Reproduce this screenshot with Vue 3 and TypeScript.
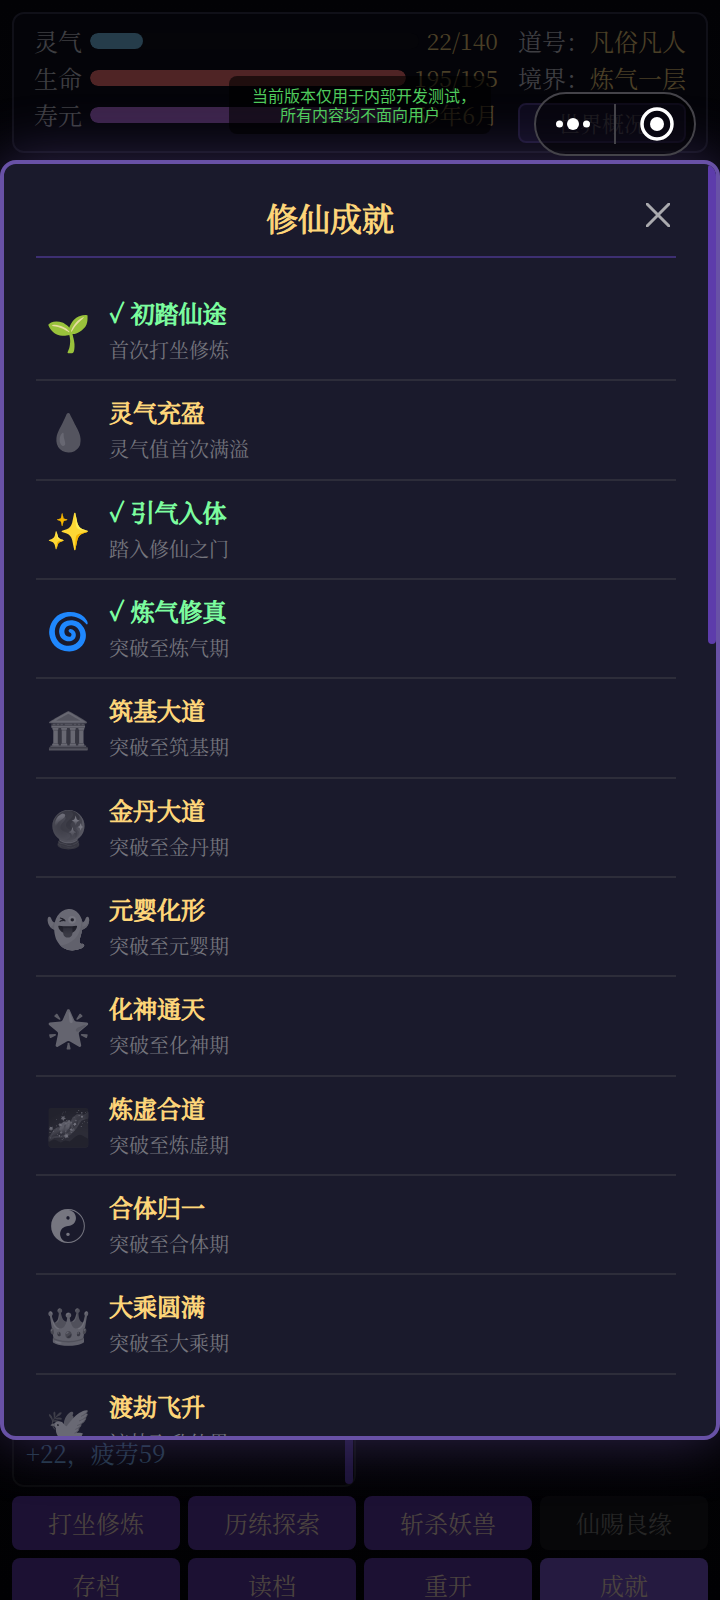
<script setup lang="ts">
interface Stat {
  label: string
  value: string
  kind: 'qi' | 'life' | 'age'
  percent: number
}

interface Achievement {
  icon: string
  title: string
  desc: string
  done?: boolean
}

interface Action {
  label: string
  state?: 'disabled' | 'active'
}

const stats: Stat[] = [
  { label: '灵气', value: '22/140', kind: 'qi', percent: 16 },
  { label: '生命', value: '195/195', kind: 'life', percent: 100 },
  { label: '寿元', value: '59年6月', kind: 'age', percent: 100 },
]

const profile = [
  { label: '道号：', value: '凡俗凡人' },
  { label: '境界：', value: '炼气一层' },
]

const achievements: Achievement[] = [
  { icon: '🌱', title: '初踏仙途', desc: '首次打坐修炼', done: true },
  { icon: '💧', title: '灵气充盈', desc: '灵气值首次满溢' },
  { icon: '✨', title: '引气入体', desc: '踏入修仙之门', done: true },
  { icon: '🌀', title: '炼气修真', desc: '突破至炼气期', done: true },
  { icon: '🏛️', title: '筑基大道', desc: '突破至筑基期' },
  { icon: '🔮', title: '金丹大道', desc: '突破至金丹期' },
  { icon: '👻', title: '元婴化形', desc: '突破至元婴期' },
  { icon: '🌟', title: '化神通天', desc: '突破至化神期' },
  { icon: '🌌', title: '炼虚合道', desc: '突破至炼虚期' },
  { icon: '☯', title: '合体归一', desc: '突破至合体期' },
  { icon: '👑', title: '大乘圆满', desc: '突破至大乘期' },
  { icon: '🕊️', title: '渡劫飞升', desc: '渡劫飞升仙界' },
]

const actions: Action[] = [
  { label: '打坐修炼' },
  { label: '历练探索' },
  { label: '斩杀妖兽' },
  { label: '仙赐良缘', state: 'disabled' },
  { label: '存档' },
  { label: '读档' },
  { label: '重开' },
  { label: '成就', state: 'active' },
]
</script>

<template>
  <div class="page">
    <header class="status">
      <div class="stats">
        <div v-for="s in stats" :key="s.label" class="stat">
          <span class="label">{{ s.label }}</span>
          <div class="track">
            <div class="fill" :class="s.kind" :style="{ width: s.percent + '%' }"></div>
          </div>
          <span class="value">{{ s.value }}</span>
        </div>
      </div>
      <div class="profile">
        <div v-for="p in profile" :key="p.label" class="fact">
          <span class="label">{{ p.label }}</span><span class="value">{{ p.value }}</span>
        </div>
        <button class="world" type="button">世界概况</button>
      </div>
    </header>

    <main class="log">
      <div class="log-box">
        <p>+22，疲劳59</p>
        <div class="log-thumb"></div>
      </div>
    </main>

    <nav class="actions">
      <button
        v-for="a in actions"
        :key="a.label"
        type="button"
        class="action"
        :class="a.state"
        :disabled="a.state === 'disabled'"
      >{{ a.label }}</button>
    </nav>

    <div class="overlay">
      <section class="modal" role="dialog" aria-labelledby="dialog-title">
        <div class="modal-head">
          <h1 id="dialog-title">修仙成就</h1>
          <button class="close" type="button" aria-label="关闭">
            <svg viewBox="0 0 24 24" width="24" height="24">
              <path d="M1 1 L23 23 M23 1 L1 23" fill="none" stroke="currentColor" stroke-width="3" stroke-linecap="round" />
            </svg>
          </button>
        </div>
        <ul class="list">
          <li v-for="item in achievements" :key="item.title" class="item" :class="{ done: item.done }">
            <span class="icon">{{ item.icon }}</span>
            <div class="text">
              <h2><template v-if="item.done">✓ </template>{{ item.title }}</h2>
              <p>{{ item.desc }}</p>
            </div>
          </li>
        </ul>
        <div class="thumb"></div>
      </section>
    </div>

    <div class="notice">
      当前版本仅用于内部开发测试<span class="stop">，</span><br />所有内容均不面向用户
    </div>

    <div class="capsule">
      <button type="button" class="more" aria-label="更多">
        <svg viewBox="0 0 34 14" width="34" height="14" fill="#fff">
          <circle cx="3.5" cy="7" r="3.5" />
          <circle cx="17" cy="7" r="6" />
          <circle cx="30.5" cy="7" r="3.5" />
        </svg>
      </button>
      <span class="divider"></span>
      <button type="button" class="exit" aria-label="关闭小程序">
        <svg viewBox="0 0 34 34" width="34" height="34">
          <circle cx="17" cy="17" r="15" fill="none" stroke="#fff" stroke-width="3.5" />
          <circle cx="17" cy="17" r="7" fill="#fff" />
        </svg>
      </button>
    </div>
  </div>
</template>

<style>
body {
  margin: 0;
  background: #010104;
}
</style>

<style scoped>
.page {
  position: relative;
  display: flex;
  flex-direction: column;
  box-sizing: border-box;
  height: 100vh;
  padding: 12px;
  overflow: hidden;
  background: linear-gradient(#020205, #040408 20%, #020204 90%, #010103);
  font-family: "Noto Serif CJK SC", "Noto Sans CJK SC", serif;
  font-size: 24px;
  line-height: 32px;
}

button {
  padding: 0;
  border: 0;
  background: none;
  color: inherit;
  font: inherit;
}

h1,
h2,
p,
ul {
  margin: 0;
  padding: 0;
}

.status {
  display: flex;
  gap: 20px;
  padding: 11px 20px 8px;
  border: 2px solid #101018;
  border-radius: 12px;
  background: #040409;
}

.stats {
  flex: 1;
  display: flex;
  flex-direction: column;
  gap: 5px;
}

.stat {
  display: flex;
  align-items: center;
  gap: 8px;
}

.label {
  color: #3e3e42;
}

.value {
  color: #4a3f26;
}

.stat .value {
  font-size: 23px;
}

.track {
  flex: 1;
  height: 16px;
  border-radius: 8px;
  background: #050509;
  overflow: hidden;
}

.fill {
  height: 100%;
  border-radius: 8px;
}

.fill.qi {
  background: #253c4a;
}

.fill.life {
  background: #4f2425;
}

.fill.age {
  background: #3b2349;
}

.profile {
  display: flex;
  flex-direction: column;
  gap: 5px;
}

.world {
  height: 40px;
  margin-top: 4px;
  border: 2px solid #1b1530;
  border-radius: 8px;
  background: #0d0a1b;
  color: #38343c;
  font-size: 22px;
  line-height: 32px;
}

.log {
  flex: 1;
  display: flex;
  align-items: flex-end;
  min-height: 0;
}

.log-box {
  position: relative;
  box-sizing: border-box;
  width: calc(50% - 4px);
  height: 300px;
  display: flex;
  align-items: flex-end;
  padding: 0 12px 16px;
  border: 2px solid #0a0b0c;
  border-radius: 12px;
  color: #203644;
}

.log-thumb {
  position: absolute;
  right: 1px;
  bottom: 1px;
  width: 8px;
  height: 120px;
  border-radius: 4px;
  background: #1b1236;
}

.actions {
  display: grid;
  grid-template-columns: repeat(4, 1fr);
  gap: 8px;
  margin: 9px 0 -24px;
}

.action {
  height: 54px;
  border-radius: 8px;
  background: #1c1133;
  color: #4b433f;
}

.action.disabled {
  background: #070709;
  color: #252525;
}

.action.active {
  background: #251a40;
}

.overlay {
  position: absolute;
  inset: 0;
  display: flex;
  align-items: center;
}

.modal {
  position: relative;
  flex: 1;
  box-sizing: border-box;
  height: 80vh;
  padding: 32px 40px 0 32px;
  border: 4px solid #6851a6;
  border-radius: 16px;
  background: #1a1a2c;
  box-shadow: 0 0 60px rgba(106, 81, 168, 0.45);
  overflow: hidden;
}

.modal-head {
  display: flex;
  align-items: flex-start;
  gap: 16px;
  height: 60px;
  border-bottom: 2px solid #3d2f72;
}

h1 {
  flex: 1;
  color: #ffd77a;
  font-size: 32px;
  font-weight: 400;
  line-height: 42px;
  text-align: center;
  -webkit-text-stroke: 1px currentColor;
}

.close {
  display: flex;
  align-items: center;
  justify-content: center;
  width: 36px;
  height: 38px;
  color: #aaaaae;
}

.list {
  display: grid;
  grid-auto-rows: 1fr;
  min-height: 1192px;
  margin-top: 24px;
  list-style: none;
}

.item {
  display: flex;
  align-items: center;
  gap: 21px;
  padding: 0 12px;
  border-bottom: 2px solid #2d2d3a;
}

.icon {
  display: flex;
  justify-content: center;
  width: 40px;
  color: #fff;
  font-size: 36px;
  line-height: 40px;
  white-space: nowrap;
  filter: grayscale(1);
  opacity: 0.4;
}

.done .icon {
  filter: none;
  opacity: 1;
}

.text {
  display: flex;
  flex-direction: column;
  gap: 3px;
}

h2 {
  color: #ffd77a;
  font-size: 24px;
  font-weight: 400;
  line-height: 36px;
  -webkit-text-stroke: 1px currentColor;
}

.done h2 {
  color: #7dffa0;
}

.text p {
  color: #74747c;
  font-size: 20px;
  line-height: 32px;
}

.thumb {
  position: absolute;
  top: 0;
  right: 0;
  width: 8px;
  height: 480px;
  border-radius: 4px;
  background: #5d3cab;
}

.notice {
  position: absolute;
  top: 76px;
  left: 50%;
  box-sizing: border-box;
  width: 262px;
  margin-left: -131px;
  padding: 10px 0;
  border-radius: 8px;
  background: rgba(0, 0, 0, 0.6);
  color: #4fca5c;
  font-family: "Noto Sans CJK SC", sans-serif;
  font-size: 16px;
  line-height: 19px;
  text-align: center;
}

.stop {
  font-feature-settings: "halt";
}

.capsule {
  position: absolute;
  top: 92px;
  right: 24px;
  display: flex;
  align-items: center;
  box-sizing: border-box;
  width: 162px;
  height: 64px;
  border: 2px solid #444349;
  border-radius: 32px;
  background: rgba(0, 0, 0, 0.5);
}

.capsule button {
  flex: 1 1 0;
  display: flex;
  align-items: center;
  justify-content: center;
}

.capsule .more {
  margin-right: 2px;
  margin-left: -2px;
}

.capsule .exit {
  margin-right: -2px;
  margin-left: 2px;
}

.divider {
  width: 2px;
  height: 40px;
  background: #444349;
}
</style>
